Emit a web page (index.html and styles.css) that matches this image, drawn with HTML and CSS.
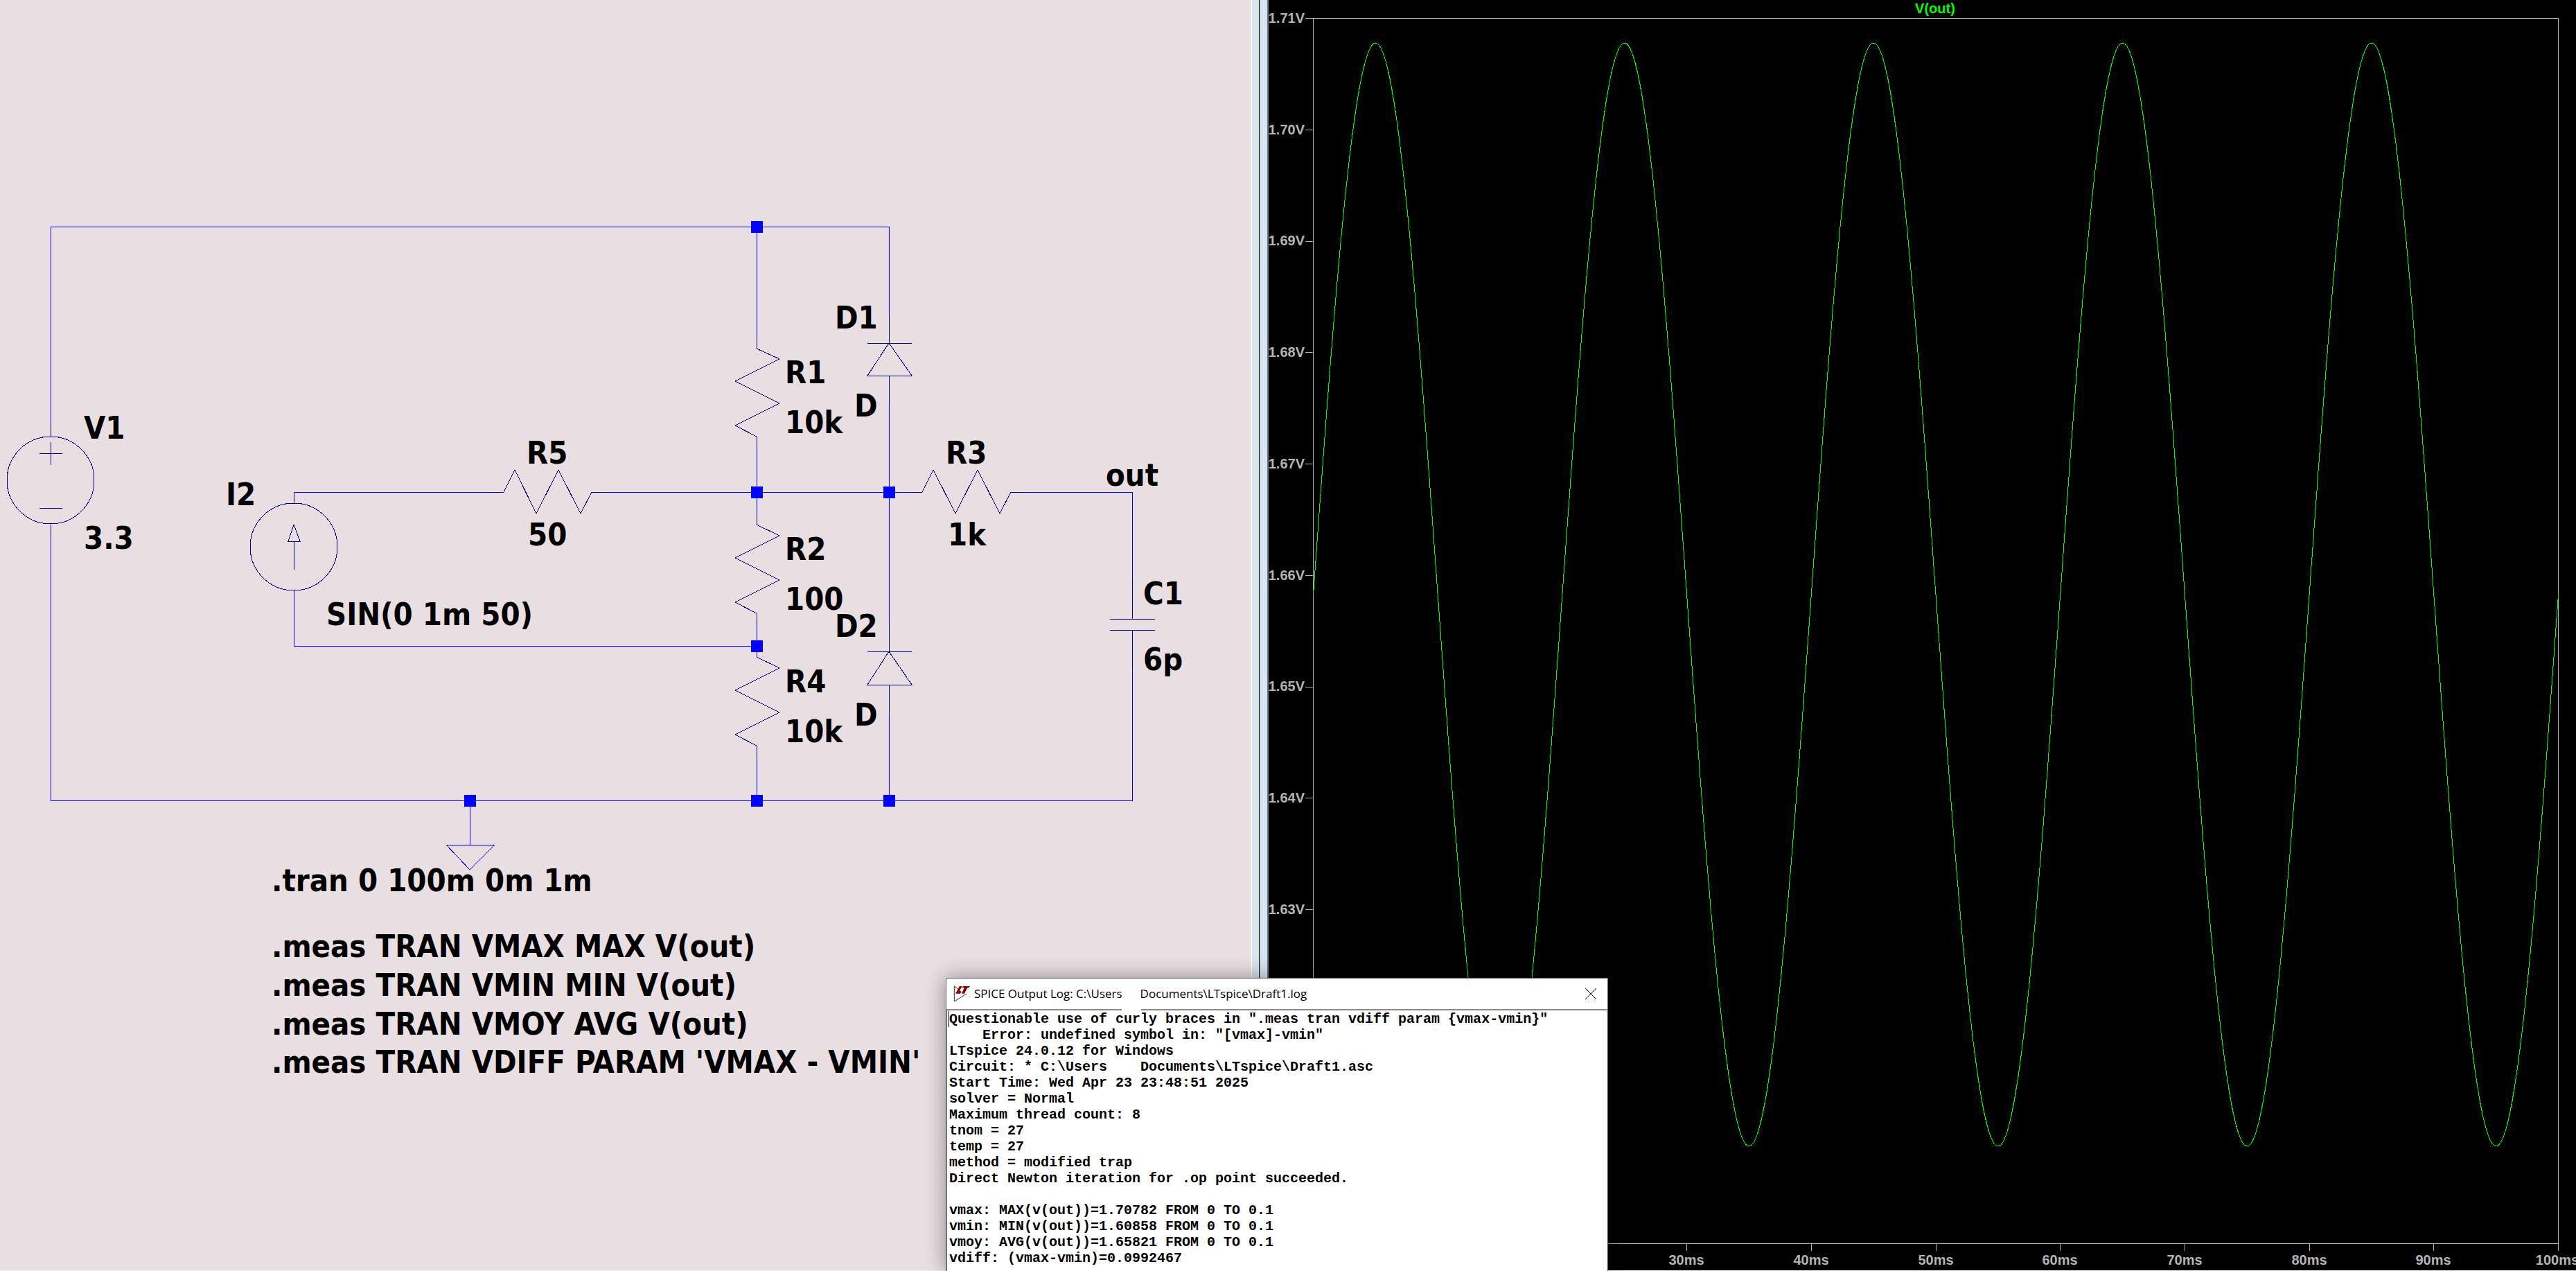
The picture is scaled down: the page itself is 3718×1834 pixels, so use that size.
FILE: index.html
```
<!DOCTYPE html>
<html lang="en">
<head>
<meta charset="utf-8">
<title>LTspice - Draft1</title>
<link rel="stylesheet" href="styles.css">
</head>
<body>
<main class="workspace">
  <section class="schematic" aria-label="Schematic">
    <svg class="canvas" viewBox="0 0 1806 1833">
      <!-- wires -->
      <g class="wire">
        <path d="M73 615V327H1283V456M1092 327V488M1092 646V742M1092 901V948M1092 1092V1155"/>
        <path d="M1283 581V902M1283 1027V1155M711 710H424M870 710H1316M1474 710H1634V837M1634 964V1155H73V772"/>
        <path d="M424 852V932H1092M678 1155V1219M644 1219H714L678 1255Z"/>
      </g>
      <!-- component bodies -->
      <g class="part">
        <path d="M73 615V630M73 756V772M57 654H90M73 638V671M57 733H90"/>
        <circle cx="73" cy="693" r="63"/>
        <path d="M424 710V726M424 822V781M416 781H433L424 757Z"/>
        <circle cx="424" cy="789" r="63"/>
        <path d="M711 710H727L743 678L774 741L806 678L838 741L854 710H870"/>
        <path d="M1316 710H1331L1347 678L1379 741L1411 678L1443 741L1459 710H1474"/>
        <path d="M1092 488V503L1125 518L1061 550L1125 582L1061 614L1092 630V646"/>
        <path d="M1092 742V757L1125 773L1061 805L1125 837L1061 869L1092 885V901"/>
        <path d="M1092 948L1125 964L1061 996L1125 1028L1061 1060L1092 1076V1092"/>
        <path d="M1283 456V495M1252 495H1316M1283 495L1316 542H1252ZM1283 542V581"/>
        <path d="M1283 902V940M1252 940H1316M1283 940L1316 988H1252ZM1283 988V1027"/>
        <path d="M1634 837V893M1602 893H1667M1602 909H1667M1634 909V964"/>
      </g>
      <!-- junctions -->
      <g class="node">
        <rect x="1084" y="319" width="17" height="17"/>
        <rect x="1084" y="702" width="17" height="17"/>
        <rect x="1275" y="702" width="17" height="17"/>
        <rect x="1084" y="924" width="17" height="17"/>
        <rect x="670" y="1147" width="17" height="17"/>
        <rect x="1084" y="1147" width="17" height="17"/>
        <rect x="1275" y="1147" width="17" height="17"/>
      </g>
      <g class="label">
        <text x="121" y="633">V1</text>
        <text x="121" y="792">3.3</text>
        <text x="326" y="729">I2</text>
        <text x="471" y="902">SIN(0 1m 50)</text>
        <text x="760" y="669">R5</text>
        <text x="762" y="787">50</text>
        <text x="1205" y="474">D1</text>
        <text x="1233" y="601">D</text>
        <text x="1133" y="553">R1</text>
        <text x="1133" y="625">10k</text>
        <text x="1365" y="669">R3</text>
        <text x="1368" y="787">1k</text>
        <text x="1596" y="701">out</text>
        <text x="1133" y="808">R2</text>
        <text x="1133" y="880">100</text>
        <text x="1205" y="919">D2</text>
        <text x="1233" y="1047">D</text>
        <text x="1133" y="999">R4</text>
        <text x="1133" y="1071">10k</text>
        <text x="1650" y="872">C1</text>
        <text x="1650" y="967">6p</text>
        <text x="392" y="1286">.tran 0 100m 0m 1m</text>
        <text x="392" y="1381">.meas TRAN VMAX MAX V(out)</text>
        <text x="392" y="1437">.meas TRAN VMIN MIN V(out)</text>
        <text x="392" y="1493">.meas TRAN VMOY AVG V(out)</text>
        <text x="392" y="1548">.meas TRAN VDIFF PARAM 'VMAX - VMIN'</text>
      </g>
    </svg>
  </section>
  <div class="splitter"><span class="frame-right"></span><span class="frame-left"></span></div>
  <section class="plot" aria-label="Waveform">
    <svg class="canvas" viewBox="1831 0 1887 1832">
      <path class="axis" d="M1884 26H3692V1805M1895 26V1794M1895 1794H3692M1884 187H1895M1884 348H1895M1884 508H1895M1884 669H1895M1884 830H1895M1884 991H1895M1884 1151H1895M1884 1312H1895M1884 1473H1895M1884 1633H1895M1884 1794H1895M1895 1794V1805M2075 1794V1805M2255 1794V1805M2434 1794V1805M2614 1794V1805M2794 1794V1805M2973 1794V1805M3153 1794V1805M3333 1794V1805M3512 1794V1805"/>
      <path class="trace" d="M1895.5 858c29.3-408 57.3-796 89.85-796s60.5 388 89.85 796s57.3 796 89.85 796s60.5-388 89.85-796s57.3-796 89.85-796s60.5 388 89.85 796s57.3 796 89.85 796s60.5-388 89.85-796s57.3-796 89.85-796s60.5 388 89.85 796s57.3 796 89.85 796s60.5-388 89.85-796s57.3-796 89.85-796s60.5 388 89.85 796s57.3 796 89.85 796s60.5-388 89.85-796s57.3-796 89.85-796s60.5 388 89.85 796s57.3 796 89.85 796s60.5-388 89.85-796"/>
      <g class="scale volts">
        <text x="1883" y="33">1.71V</text>
        <text x="1883" y="194">1.70V</text>
        <text x="1883" y="354">1.69V</text>
        <text x="1883" y="515">1.68V</text>
        <text x="1883" y="676">1.67V</text>
        <text x="1883" y="837">1.66V</text>
        <text x="1883" y="997">1.65V</text>
        <text x="1883" y="1158">1.64V</text>
        <text x="1883" y="1319">1.63V</text>
      </g>
      <g class="scale time">
        <text x="2434" y="1825">30ms</text>
        <text x="2614" y="1825">40ms</text>
        <text x="2794" y="1825">50ms</text>
        <text x="2973" y="1825">60ms</text>
        <text x="3153" y="1825">70ms</text>
        <text x="3333" y="1825">80ms</text>
        <text x="3512" y="1825">90ms</text>
        <text x="3691" y="1825">100ms</text>
      </g>
      <text class="scale signal" x="2793" y="19">V(out)</text>
    </svg>
  </section>
</main>
<section class="log-window" aria-label="SPICE Output Log">
  <header class="titlebar">
    <svg class="app-icon" viewBox="0 0 72 72" aria-hidden="true">
      <path class="app-icon-line" d="M4 3V69L57 36M4 3L22 16"/>
      <path class="app-icon-mark" d="M27 3H38L28 22L35 27L30 35H9ZM42 3H72L67 10H61L48 35H36L47 10H38Z"/>
    </svg>
    <span>SPICE Output Log: C:\Users</span><span class="redacted"></span><span class="file">Documents\LTspice\Draft1.log</span>
    <button class="close" type="button" aria-label="Close"><svg viewBox="0 0 16 16" aria-hidden="true"><path d="M0 0L16 16M16 0L0 16"/></svg></button>
  </header>
  <pre class="log">Questionable use of curly braces in ".meas tran vdiff param {vmax-vmin}"
    Error: undefined symbol in: "[vmax]-vmin"
LTspice 24.0.12 for Windows
Circuit: * C:\Users    Documents\LTspice\Draft1.asc
Start Time: Wed Apr 23 23:48:51 2025
solver = Normal
Maximum thread count: 8
tnom = 27
temp = 27
method = modified trap
Direct Newton iteration for .op point succeeded.

vmax: MAX(v(out))=1.70782 FROM 0 TO 0.1
vmin: MIN(v(out))=1.60858 FROM 0 TO 0.1
vmoy: AVG(v(out))=1.65821 FROM 0 TO 0.1
vdiff: (vmax-vmin)=0.0992467</pre>
</section>
</body>
</html>
```
FILE: styles.css
```
* {
  box-sizing: border-box;
}

body {
  margin: 0;
  min-height: 100vh;
  position: relative;
  overflow: hidden;
  background: #f4f4f4;
  font-family: "Open Sans", sans-serif;
}

.workspace {
  display: grid;
  grid-template-columns: 1806fr 25px 1887fr;
  min-height: 100vh;
  padding-bottom: 1px;
}

.schematic {
  background: #e9dfe2;
}

.plot {
  background: #000;
}

.canvas {
  display: block;
  width: 100%;
  height: auto;
}

/* window frames between the two panes */
.splitter {
  display: flex;
  background: #d7e4f2;
}

.frame-right {
  width: 13px;
  border-left: 1px solid #fff;
  border-right: 2px solid #4f4f4f;
}

.frame-left {
  flex: 1;
  border-left: 1px solid #eef3f9;
  border-right: 2px solid #747a80;
}

/* schematic */
.wire,
.part {
  fill: none;
  stroke-width: 1px;
  shape-rendering: crispEdges;
}

.wire {
  stroke: #00f;
}

.part {
  stroke: #000080;
}

.node {
  fill: #00f;
}

.label {
  font: bold 45px "DejaVu Sans Condensed", "DejaVu Sans", sans-serif;
  fill: #000;
}

/* waveform */
.axis {
  fill: none;
  stroke: #b4b4b4;
  shape-rendering: crispEdges;
}

.trace {
  fill: none;
  stroke: #0f0;
  shape-rendering: crispEdges;
}

.scale {
  font: bold 20px "Liberation Sans", Arial, sans-serif;
  fill: #b4b4b4;
}

.volts {
  text-anchor: end;
}

.time {
  text-anchor: middle;
}

.signal {
  text-anchor: middle;
  fill: #0f0;
}

/* floating log window */
.log-window {
  position: absolute;
  left: 1365px;
  top: 1411px;
  bottom: 0;
  width: 956px;
  display: flex;
  flex-direction: column;
  background: #fff;
  border: 1px solid #646464;
  border-bottom: 0;
  box-shadow: 0 0 28px rgba(0, 0, 0, 0.4);
}

.titlebar {
  display: flex;
  align-items: center;
  height: 46px;
  padding: 0 16px 0 10px;
  border-bottom: 2px solid #8a8a8a;
  font-size: 17px;
  line-height: 24px;
  color: #000;
  white-space: nowrap;
}

.app-icon {
  width: 24px;
  height: 24px;
  margin-right: 6px;
}

.app-icon-line {
  fill: none;
  stroke: #333;
  stroke-width: 3px;
}

.app-icon-mark {
  fill: #8b0000;
}

/* blanked user name, covers the title's rule too */
.redacted {
  width: 28px;
  height: 46px;
  margin: 0 -1px;
  margin-bottom: -2px;
  background: #fff;
  z-index: 1;
}

.close {
  width: 16px;
  height: 16px;
  margin-left: auto;
  padding: 0;
  border: 0;
  background: none;
}

.close svg {
  display: block;
  width: 16px;
  height: 16px;
}

.close path {
  stroke: #000;
  stroke-width: 1px;
}

.log {
  position: relative;
  flex: 1;
  margin: 0;
  padding: 1px 2px 0 3px;
  border-left: 1px solid #7a7a7a;
  border-right: 1px solid #c8c8c8;
  font: bold 20px/23px "Liberation Mono", "Courier New", monospace;
  color: #000;
}

/* text caret */
.log::before {
  content: "";
  position: absolute;
  left: 2px;
  top: 1px;
  width: 1px;
  height: 23px;
  background: #000;
}
```
